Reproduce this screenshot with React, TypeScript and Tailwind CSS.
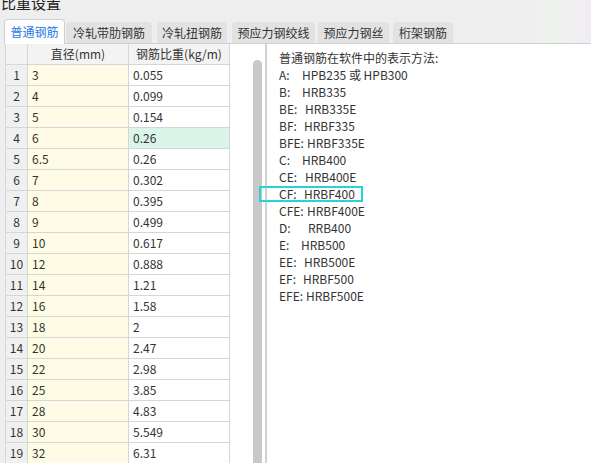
import React from 'react'

const tabs = [
  { label: '普通钢筋', cls: 'ml-[4px] w-[61px] h-[25px] bg-white border border-b-0 border-[#d0d0d0] text-[#2a78e4] -mb-px z-10' },
  { label: '冷轧带肋钢筋', cls: 'ml-[1px] w-[86px] h-[21px] bg-[#e2e2e2] text-[#333]' },
  { label: '冷轧扭钢筋', cls: 'ml-[5px] w-[70px] h-[21px] bg-[#e2e2e2] text-[#333]' },
  { label: '预应力钢绞线', cls: 'ml-[5px] w-[83px] h-[21px] bg-[#e2e2e2] text-[#333]' },
  { label: '预应力钢丝', cls: 'ml-[3px] w-[71px] h-[21px] bg-[#e2e2e2] text-[#333]' },
  { label: '桁架钢筋', cls: 'ml-[4px] w-[60px] h-[21px] bg-[#e2e2e2] text-[#333]' },
]

const rows: [string, string][] = [
  ['3', '0.055'], ['4', '0.099'], ['5', '0.154'], ['6', '0.26'], ['6.5', '0.26'],
  ['7', '0.302'], ['8', '0.395'], ['9', '0.499'], ['10', '0.617'], ['12', '0.888'],
  ['14', '1.21'], ['16', '1.58'], ['18', '2'], ['20', '2.47'], ['22', '2.98'],
  ['25', '3.85'], ['28', '4.83'], ['30', '5.549'], ['32', '6.31'],
]

// label width decides where the grade name starts
const grades = [
  { k: 'A:', v: 'HPB235 或 HPB300', w: 'w-[23px]' },
  { k: 'B:', v: 'HRB335', w: 'w-[23px]' },
  { k: 'BE:', v: 'HRB335E', w: 'w-[26px]' },
  { k: 'BF:', v: 'HRBF335', w: 'w-[25px]' },
  { k: 'BFE:', v: 'HRBF335E', w: 'w-[28px]' },
  { k: 'C:', v: 'HRB400', w: 'w-[23px]' },
  { k: 'CE:', v: 'HRB400E', w: 'w-[26px]' },
  { k: 'CF:', v: 'HRBF400', w: 'w-[25px]' },
  { k: 'CFE:', v: 'HRBF400E', w: 'w-[28px]' },
  { k: 'D:', v: 'RRB400', w: 'w-[29px]' },
  { k: 'E:', v: 'HRB500', w: 'w-[22px]' },
  { k: 'EE:', v: 'HRB500E', w: 'w-[25px]' },
  { k: 'EF:', v: 'HRBF500', w: 'w-[24px]' },
  { k: 'EFE:', v: 'HRBF500E', w: 'w-[27px]' },
]

export default function App() {
  return (
    <div
      className="w-[591px] h-[463px] overflow-hidden flex flex-col bg-[linear-gradient(90deg,#eeeeee_0%,#eeeeee_88%,#eef3ee_94%,#f1ecf5_100%)] text-[12px] text-[#333]"
      style={{ fontFamily: '"Noto Sans CJK SC", "Noto Sans", sans-serif' }}
    >
      {/* window title, mostly scrolled off */}
      <div className="h-[18px] shrink-0 overflow-hidden pl-[1px]">
        <div className="text-[15px] leading-[15px] -mt-[5px] text-[#222]">比重设置</div>
      </div>

      {/* tabs */}
      <div className="h-[25px] shrink-0 flex items-end">
        {tabs.map(t => (
          <div key={t.label} className={`flex items-center justify-center rounded-t-[4px] leading-none ${t.cls}`}>
            {t.label}
          </div>
        ))}
      </div>

      <div className="flex-1 flex border-t border-[#d0d0d0] bg-white ml-[5px] relative">
        {/* table */}
        <div className="w-[225px] shrink-0 border-l border-r border-[#d6d6d6]">
          <div className="flex h-[21px] bg-[#f3f3f3] border-b border-[#d6d6d6]">
            <div className="w-[22px] border-r border-[#d6d6d6]" />
            <div className="w-[101px] border-r border-[#d6d6d6] flex items-center justify-center">直径(mm)</div>
            <div className="flex-1 flex items-center justify-center">钢筋比重(kg/m)</div>
          </div>
          {rows.map(([d, w], i) => (
            <div key={i} className="flex h-[21px] border-b border-[#d6d6d6]">
              <div className="w-[22px] bg-[#f0f0f0] border-r border-[#d6d6d6] flex items-center justify-center">{i + 1}</div>
              <div className="w-[101px] bg-[#fffce6] border-r border-[#d6d6d6] flex items-center pl-[4px]">{d}</div>
              <div className={`flex-1 flex items-center pl-[4px] ${i === 3 ? 'bg-[#dcf5ea]' : ''}`}>{w}</div>
            </div>
          ))}
        </div>

        {/* scrollbar gutter */}
        <div className="w-[35px] shrink-0 flex justify-end pr-[3px]">
          <div className="w-[9px] mt-[16px] bg-[#c8c8c8] rounded-t-[5px]" />
        </div>

        {/* description */}
        <div className="flex-1 border-l-2 border-[#d2d2d2] pl-[12px] pt-[5px] leading-[17px]">
          <div>普通钢筋在软件中的表示方法:</div>
          {grades.map(g => (
            <div key={g.k} className="flex">
              <span className={`inline-block ${g.w}`}>{g.k}</span>
              <span>{g.v}</span>
            </div>
          ))}
        </div>

        {/* highlight marker */}
        <div className="absolute left-[254px] top-[142px] w-[104px] h-[16px] border-2 border-[#26d3d6] pointer-events-none" />
      </div>
    </div>
  )
}
